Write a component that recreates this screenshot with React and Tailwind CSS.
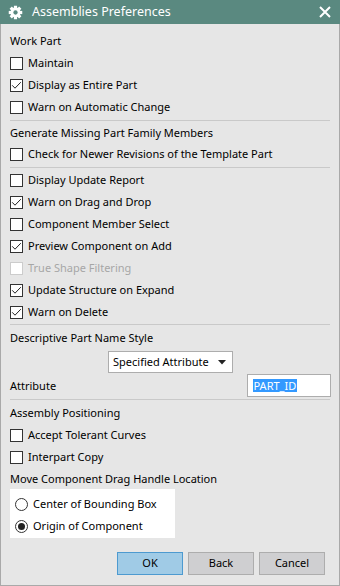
import React from "react";

const Check = ({ checked, disabled }) => (
  <div
    className={`w-[13px] h-[13px] shrink-0 border bg-white flex items-center justify-center ${
      disabled ? "border-[#cccccc]" : "border-[#333333]"
    }`}
  >
    {checked && (
      <svg width="11" height="11" viewBox="0 0 11 11">
        <polyline points="1.2,5.3 4,8.2 9.8,2.2" fill="none" stroke="#222" strokeWidth="1" />
      </svg>
    )}
  </div>
);

const Row = ({ label, checked, disabled }) => (
  <div className="h-[22px] flex items-center gap-[5px]">
    <Check checked={checked} disabled={disabled} />
    <span className={disabled ? "text-[#a6a6a6]" : "text-black"}>{label}</span>
  </div>
);

const Header = ({ children, h = "h-[22px] leading-[22px]" }) => <div className={h}>{children}</div>;

const Sep = ({ cls }) => <div className={`h-[1px] bg-[#c9c9c9] ${cls}`} />;

const Radio = ({ label, selected }) => (
  <div className="h-[22px] flex items-center gap-[5px]">
    <div className="w-[13px] h-[13px] rounded-full border border-[#333333] bg-white flex items-center justify-center shrink-0">
      {selected && <div className="w-[7px] h-[7px] rounded-full bg-[#222222]" />}
    </div>
    <span>{label}</span>
  </div>
);

const Gear = () => (
  <svg width="15" height="15" viewBox="0 0 16 16">
    {[0, 45, 90, 135].map((a) => (
      <rect key={a} x="6.3" y="0.8" width="3.4" height="14.4" fill="white" transform={`rotate(${a} 8 8)`} />
    ))}
    <circle cx="8" cy="8" r="5.4" fill="white" />
    <circle cx="8" cy="8" r="2.3" fill="#5a8980" />
  </svg>
);

const Btn = ({ children, primary }) => (
  <div
    className={`w-[66px] h-[23px] flex items-center justify-center border ${
      primary ? "bg-[#a0cbe6] border-[#4d9ad0]" : "bg-[#cfcfd1] border-[#adadad]"
    }`}
  >
    {children}
  </div>
);

export default function App() {
  return (
    <div className="w-[340px] h-[586px] bg-[#e6e6e6] border-x border-b border-[#a9a9a9] flex flex-col font-['Noto_Sans',sans-serif] text-[11px] text-black">
      <div className="h-[24px] shrink-0 bg-[#5a8980] flex items-center text-white -mx-[1px]">
        <div className="w-[16px] ml-[7px] flex items-center justify-center">
          <Gear />
        </div>
        <div className="ml-[9px] text-[12.5px]">Assemblies Preferences</div>
        <div className="ml-auto mr-[9px]">
          <svg width="12" height="12" viewBox="0 0 12 12">
            <path d="M1 1 L11 11 M11 1 L1 11" stroke="white" strokeWidth="2" />
          </svg>
        </div>
      </div>
      <div className="flex flex-col px-[9px] pt-[6px]">
        <Header>Work Part</Header>
        <Row label="Maintain" />
        <Row label="Display as Entire Part" checked />
        <Row label="Warn on Automatic Change" />
        <Sep cls="mt-[2px] mb-[1px]" />
        <Header h="h-[21px] leading-[21px]">Generate Missing Part Family Members</Header>
        <Row label="Check for Newer Revisions of the Template Part" />
        <Sep cls="mt-[2px] mb-[1px]" />
        <Row label="Display Update Report" />
        <Row label="Warn on Drag and Drop" checked />
        <Row label="Component Member Select" />
        <Row label="Preview Component on Add" checked />
        <Row label="True Shape Filtering" disabled />
        <Row label="Update Structure on Expand" checked />
        <Row label="Warn on Delete" checked />
        <Sep cls="mt-[1px] mb-[2px]" />
        <Header>Descriptive Part Name Style</Header>
        <div className="mt-[2px] ml-[98px] w-[125px] h-[22px] bg-white border border-[#adadad] flex items-center pl-[4px] pr-[6px]">
          <span>Specified Attribute</span>
          <svg className="ml-auto" width="8" height="5" viewBox="0 0 8 5">
            <polygon points="0,0 8,0 4,4.5" fill="#222" />
          </svg>
        </div>
        <div className="mt-[1px] h-[23px] flex items-center justify-between">
          <span className="pt-[2px]">Attribute</span>
          <div className="w-[84px] h-[23px] bg-white border border-[#adadad] flex items-center pl-[5px] mr-[-1px]">
            <span className="bg-[#3399ff] text-white leading-[13px] h-[13px] px-[0.5px]">PART_ID</span>
          </div>
        </div>
        <Sep cls="mt-[2px] mb-[2px]" />
        <Header>Assembly Positioning</Header>
        <Row label="Accept Tolerant Curves" />
        <Row label="Interpart Copy" />
        <Header h="h-[21px] leading-[21px]">Move Component Drag Handle Location</Header>
        <div className="w-[165px] h-[49px] bg-white pl-[5px] pt-[4px]">
          <Radio label="Center of Bounding Box" />
          <Radio label="Origin of Component" selected />
        </div>
        <div className="mt-[14px] flex justify-end gap-[5px] mr-[5px]">
          <Btn primary>OK</Btn>
          <Btn>Back</Btn>
          <Btn>Cancel</Btn>
        </div>
      </div>
    </div>
  );
}
